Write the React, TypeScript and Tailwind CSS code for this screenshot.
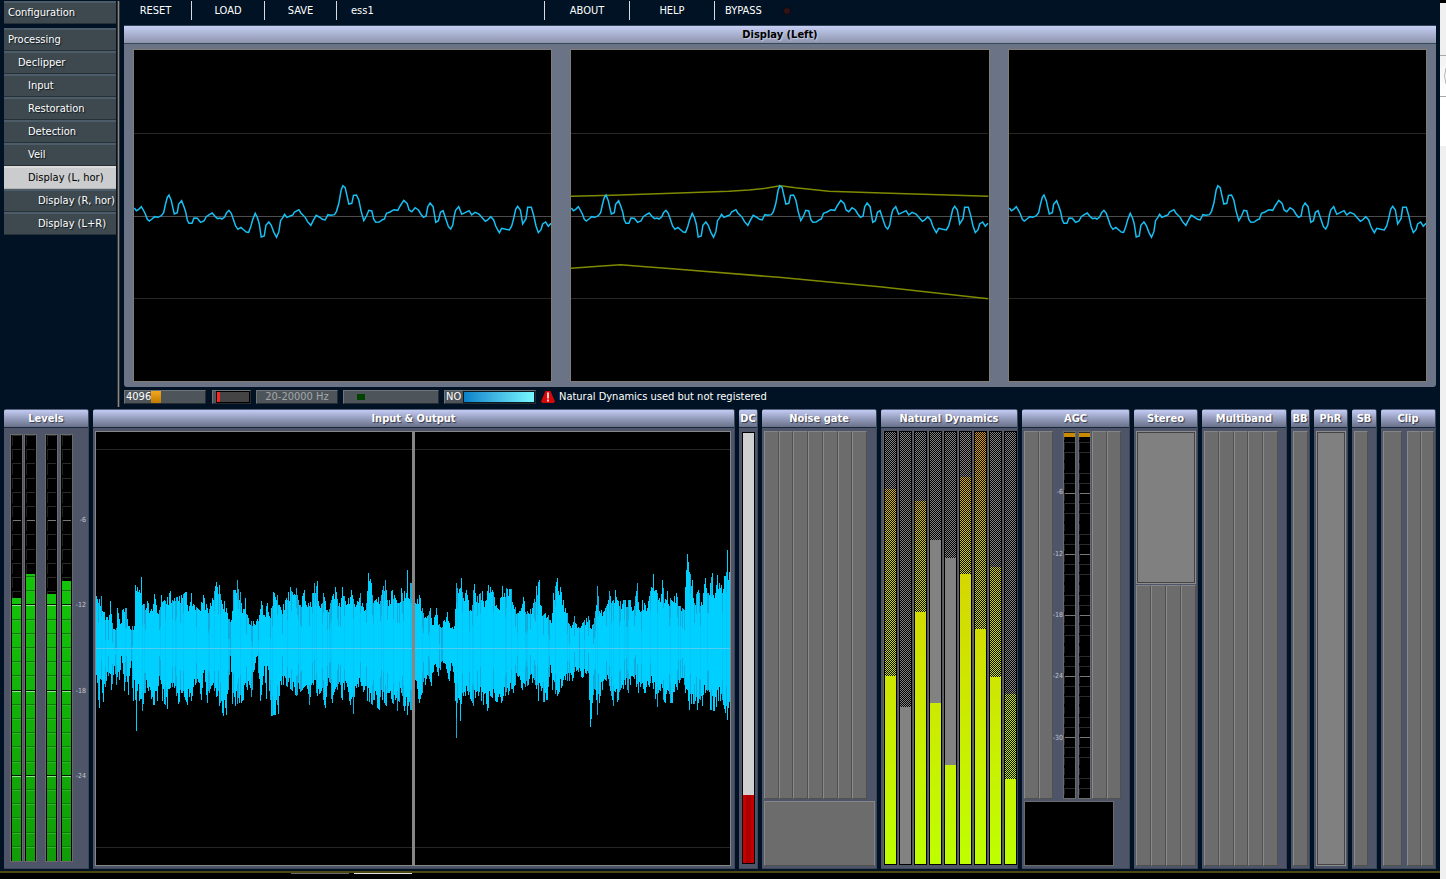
import React from 'react';

// ---------- Data ----------

const menu = [
  { label: 'Processing', indent: 'pl-1' },
  { label: 'Declipper', indent: 'pl-3.5' },
  { label: 'Input', indent: 'pl-6' },
  { label: 'Restoration', indent: 'pl-6' },
  { label: 'Detection', indent: 'pl-6' },
  { label: 'Veil', indent: 'pl-6' },
  { label: 'Display (L, hor)', indent: 'pl-6', active: true },
  { label: 'Display (R, hor)', indent: 'pl-8.5' },
  { label: 'Display (L+R)', indent: 'pl-8.5' },
];

const scopeWave =
  '27,174 33,182 40,178 48,170 54,180 60,192 66,208 72,213 80,207 88,200 98,202 108,197 115,188 120,165 126,142 131,135 138,152 143,175 147,192 156,188 160,163 169,152 176,170 181,185 186,210 191,220 200,220 206,204 216,205 226,217 236,213 243,200 252,194 261,189 270,200 277,206 284,204 290,207 298,201 304,188 311,181 318,190 324,207 331,228 338,238 347,232 356,240 363,246 370,247 376,232 382,210 390,190 397,204 402,222 408,261 417,258 422,226 431,216 438,226 446,247 454,262 461,245 466,212 473,202 478,193 485,202 495,198 503,195 508,186 521,179 527,189 540,202 547,215 557,226 564,212 573,196 582,201 592,208 600,210 608,194 617,196 628,194 634,184 641,160 648,120 653,107 660,113 666,140 671,162 680,160 685,136 694,135 701,150 708,184 716,212 724,198 731,181 740,183 746,208 752,217 762,216 772,209 778,207 784,190 795,186 806,179 818,181 825,168 836,151 846,160 852,180 860,185 870,173 880,180 887,192 895,202 903,198 908,170 915,159 924,170 932,217 940,212 946,187 954,182 962,206 970,230 977,237 983,225 988,195 992,180 1001,170 1010,193 1020,188 1032,182 1040,195 1050,187 1062,192 1072,204 1081,214 1088,210 1097,200 1106,210 1112,228 1118,240 1123,248 1130,235 1142,238 1153,240 1160,228 1166,205 1172,178 1178,169 1186,180 1193,222 1203,206 1208,172 1219,172 1226,196 1233,228 1240,248 1248,239 1253,222 1262,216 1270,229 1278,220';

const scopeUpper =
  '26,139 150,136 330,130 500,124 560,120 610,115 655,107 700,113 800,124 960,129 1279,139';
const scopeLower = '26,355 120,348 175,344 250,350 330,356 650,382 960,411 1279,446';

// Peaks of the input and output signal, three units per pixel column
const inTop =
  '21,200 35,200 40,245 60,255 63,215 68,280 80,295 83,235 95,280 98,240 112,235 118,290 134,290 138,165 150,180 157,143 160,225 175,215 190,245 195,192 205,250 217,195 228,215 243,183 255,205 270,200 290,187 300,230 305,190 315,225 330,240 342,195 355,235 370,205 381,156 390,165 395,210 405,215 415,250 425,270 432,180 438,180 444,150 452,187 460,250 467,205 475,255 485,275 500,275 510,255 517,215 525,255 533,220 543,265 551,186 565,195 575,240 590,205 603,171 620,175 630,225 645,180 660,230 676,160 685,153 690,230 702,190 715,240 730,200 737,172 750,220 760,171 770,225 787,180 800,225 812,190 828,240 836,129 847,160 855,215 875,195 887,152 895,210 908,180 925,220 937,175 950,190 953,120 957,205 962,160';
const inBottom =
  '21,435 29,535 35,450 42,518 50,455 60,430 67,480 75,410 82,465 90,450 97,380 105,485 112,440 118,495 125,395 131,515 136,450 141,603 145,485 151,515 160,545 165,490 178,485 193,527 203,515 212,450 220,515 235,538 245,460 260,500 268,523 280,490 294,525 305,515 320,460 335,512 345,420 353,520 365,470 375,485 390,530 403,560 412,557 417,480 424,380 430,522 438,530 445,522 455,520 463,510 475,480 487,502 497,400 503,380 514,515 525,410 531,508 535,410 545,560 556,555 566,553 575,465 590,470 605,480 620,500 635,485 650,465 659,525 670,460 684,500 697,485 707,535 715,470 730,520 745,480 758,510 770,460 780,515 792,553 800,475 815,470 835,515 850,525 870,540 880,510 890,530 900,490 910,520 925,545 935,490 945,545 953,555 962,540';
const outTop =
  '30,220 43,197 52,235 65,260 75,235 82,285 93,235 100,285 115,275 126,248 135,295 148,290 152,160 160,190 168,145 175,205 183,180 195,240 207,163 215,200 230,185 240,215 250,165 262,180 275,235 285,205 292,168 305,178 318,178 325,225 340,250 354,202 365,245 380,235 387,207 394,168 401,152 405,225 420,250 430,255 438,280 445,190 456,145 465,172 473,212 485,250 495,290 508,258 515,295 530,280 550,258 556,295 570,245 577,168 582,245 600,235 611,185 620,215 630,180 645,215 660,210 675,210 680,245 690,200 697,160 703,240 712,210 725,235 737,172 745,132 752,180 762,205 772,152 778,220 785,183 800,215 812,190 825,230 836,240 846,72 853,127 860,150 865,205 880,180 890,225 899,145 910,190 920,131 928,205 937,137 945,175 957,140 965,60 968,150 974,115';
const outBottom =
  '30,450 41,520 50,490 60,465 70,440 79,470 88,405 100,440 112,395 125,430 131,455 138,400 147,460 153,625 158,505 166,575 175,500 190,495 205,530 220,500 235,525 247,545 255,500 270,515 288,520 300,500 325,490 335,440 350,480 365,470 380,460 399,515 405,470 415,518 425,510 436,405 442,480 455,500 470,470 485,455 500,455 515,420 530,445 548,430 556,593 562,520 570,480 577,555 585,500 600,450 612,470 625,530 640,512 660,465 670,490 680,440 700,490 720,490 740,460 755,533 760,490 780,520 800,520 815,480 825,450 840,490 852,540 875,540 890,530 900,490 915,540 928,545 940,515 950,510 965,570 974,550';

// Band levels, measured downwards on a 432 high scale.
// dither: end of the dotted part, gray: end of the gray part
const bands = [
  { dither: 244, gray: 57 },
  { dither: 275, gray: 432 },
  { dither: 180, gray: 69 },
  { dither: 108, gray: 271 },
  { dither: 126, gray: 333 },
  { dither: 142, gray: 45 },
  { dither: 197, gray: 0 },
  { dither: 245, gray: 135 },
  { dither: 347, gray: 262 },
];

// ---------- Helpers ----------

const parse = (s: string) => s.split(' ').map((p) => p.split(',').map(Number));

const at = (pts: number[][], x: number) => {
  let i = 1;
  while (i < pts.length - 1 && pts[i][0] < x) i++;
  const [x0, y0] = pts[i - 1];
  const [x1, y1] = pts[i];
  const t = Math.min(1, Math.max(0, (x - x0) / (x1 - x0)));
  return y0 + (y1 - y0) * t;
};

const noise = (n: number) => {
  const v = Math.sin(n * 127.1 + 3.7) * 43758.5453;
  return v - Math.floor(v);
};

// Listed peaks keep their full length, the columns between them are ragged
const reach = (pts: number[][], x: number, depth: number, n: number) => {
  const peak = pts.find((p) => Math.abs(p[0] - x) <= 1.5);
  if (peak) return Math.abs(peak[1] - 355) / 3;
  const r = noise(n);
  return (Math.abs(at(pts, x) - 355) / 3) * (r > 0.65 ? 1 : 1 - depth * (0.25 + r));
};

// ---------- Parts ----------

const Scope = ({ limits = false }: { limits?: boolean }) => (
  <div className="flex-1 min-w-0 bg-black border border-[#827d74]">
    <svg className="block w-full h-full" viewBox="26 -300 1253 993" preserveAspectRatio="none" fill="none">
      <g stroke="#262626" shapeRendering="crispEdges">
        <line x1="26" x2="1279" y1="-50" y2="-50" vectorEffect="non-scaling-stroke" />
        <line x1="26" x2="1279" y1="199" y2="199" stroke="#4c4c4c" vectorEffect="non-scaling-stroke" />
        <line x1="26" x2="1279" y1="445" y2="445" vectorEffect="non-scaling-stroke" />
      </g>
      {limits && (
        <g stroke="#7f8a00" strokeWidth="1.5">
          <polyline points={scopeUpper} vectorEffect="non-scaling-stroke" />
          <polyline points={scopeLower} vectorEffect="non-scaling-stroke" />
        </g>
      )}
      <polyline points={scopeWave} stroke="#17c0f4" strokeWidth="1.5" vectorEffect="non-scaling-stroke" />
    </svg>
  </div>
);

const Signal = ({ top, bottom, start, seed }: { top: string; bottom: string; start: number; seed: number }) => {
  const up = parse(top);
  const down = parse(bottom);
  const columns = Array.from({ length: 315 }, (_, i) => {
    const x = start + i * 3;
    return {
      top: Math.round(216 - reach(up, x, 0.22, i + seed)),
      bottom: Math.round(216 + reach(down, x, 0.3, i * 2 + seed + 9)),
      dim: noise(i * 3 + seed),
    };
  });
  return (
    <div className="flex-1 min-w-0 bg-black border border-[#868686]">
      <svg className="block w-full h-full" viewBox="0 0 315 433" preserveAspectRatio="none" shapeRendering="crispEdges">
        <rect y="17" width="315" height="1" fill="#262626" />
        <rect y="415" width="315" height="1" fill="#262626" />
        {columns.map((c, i) => (
          <g key={i}>
            <rect x={i} y={c.top} width="1" height={c.bottom - c.top} fill={c.dim > 0.72 ? '#12acdc' : '#00d0ff'} />
            <rect x={i} y={c.top + 20} width="1" height={Math.max(0, c.bottom - c.top - 40)} fill={c.dim > 0.85 ? '#04c6f6' : '#00d0ff'} />
          </g>
        ))}
        <rect y="216" width="315" height="1" fill="#52cdf2" />
      </svg>
    </div>
  );
};

const Meter = ({ count, level, cap, id }: { count: number; level?: number; cap?: boolean; id: string }) => {
  const step = 427 / count;
  return (
    <div className="w-[13px] bg-black border border-[#6b6b6b]">
      <svg className="block w-full h-full" viewBox="0 0 11 427" preserveAspectRatio="none" shapeRendering="crispEdges">
        <defs>
          <linearGradient id={id} x1="0" x2="0" y1="0" y2="427" gradientUnits="userSpaceOnUse">
            <stop offset="0.35" stopColor="#13c40a" />
            <stop offset="1" stopColor="#119b08" />
          </linearGradient>
        </defs>
        {Array.from({ length: count }, (_, i) => (
          <g key={i}>
            <rect x={cap ? 0 : 1} y={i * step} width={cap ? 11 : 9} height="1" fill={i > 0 && i % 6 === 0 ? '#777777' : '#2b2b2b'} />
            <rect x={cap ? 0 : 1} y={i * step} width="1" height={step - 3} fill="#202020" />
          </g>
        ))}
        {cap && <rect x="0" y="1" width="11" height="5" fill="#c88a00" />}
        {level !== undefined && (
          <>
            <rect x="1" y={level} width="9" height={427 - level} fill={`url(#${id})`} />
            {Array.from({ length: count }, (_, i) => i)
              .filter((i) => i * step > level)
              .map((i) => (
                <g key={i}>
                  <rect x="1" y={i * step - 1} width="9" height="1" fill={i % 6 === 0 ? '#001800' : '#0c7c06'} />
                  <rect x="1" y={i * step} width="9" height="1" fill={i % 6 === 0 ? '#8fe58a' : '#2cb526'} />
                </g>
              ))}
          </>
        )}
      </svg>
    </div>
  );
};

const Band = ({ dither, gray, index }: { dither: number; gray: number; index: number }) => (
  <div className="w-[14px] bg-black border-l border-[#68635e] p-px">
    <div className="relative h-full bg-linear-to-b from-[#dc9a00] via-[#d6d400] via-28% to-[#beff00]">
      <div className="bg-[#828282]" style={{ height: `${(gray / 432) * 100}%` }} />
      <svg className="absolute inset-0 w-full h-full" shapeRendering="crispEdges">
        <defs>
          {/* bands are 15px apart, so every other one shifts to keep one checkerboard */}
          <pattern id={`dots${index}`} x={index % 2} width="2" height="2" patternUnits="userSpaceOnUse">
            <rect width="1" height="1" />
            <rect x="1" y="1" width="1" height="1" />
          </pattern>
        </defs>
        <rect width="100%" height={`${(dither / 432) * 100}%`} fill={`url(#dots${index})`} />
      </svg>
    </div>
  </div>
);

const Slot = ({ wide = false }: { wide?: boolean }) => (
  <div
    className={`${wide ? 'w-[19px]' : 'flex-1 min-w-0'} bg-[#6c6c6c] border-t border-l border-t-[#858585] border-l-[#8a8a8a] border-r border-r-[#50504c] border-b border-b-[#50504c]`}
  />
);

const Slots = ({ count }: { count: number }) => (
  <>
    {Array.from({ length: count }, (_, i) => (
      <Slot key={i} />
    ))}
  </>
);

const Well = ({ className = '' }: { className?: string }) => (
  <div className={`flex bg-[#808080] border border-[#8c8c8c] ${className}`}>
    <div className="flex-1 border border-[#444444]" />
  </div>
);

const Scale = ({ rows, labels }: { rows: string; labels: string[] }) => (
  <div className={`grid ${rows} text-[7px] leading-[8px] text-[#c3c6d0]`}>
    {labels.map((l) => (
      <div key={l} className="flex items-end justify-end whitespace-nowrap">
        <span className="translate-y-1/2">{l}</span>
      </div>
    ))}
  </div>
);

const Panel = ({ title, width, children }: { title: string; width: string; children: React.ReactNode }) => (
  <section className={`${width} flex flex-col min-w-0 rounded-t-[3px] overflow-hidden bg-[#4f5568] border-r border-b border-[#3b4659]`}>
    <h2 className="h-[18px] shrink-0 flex items-center justify-center whitespace-nowrap font-bold text-white bg-linear-to-b from-[#c3cbf4] to-[#697189] border-t border-[#56607a] [text-shadow:1px_1px_1px_#30384c]">
      {title}
    </h2>
    <div className="h-px shrink-0 bg-[#17273b]" />
    <div className="flex-1 min-h-0 flex flex-col pt-[3px] pb-[2px] pl-[2px] pr-px">{children}</div>
  </section>
);

const Divider = () => <div className="w-px my-px bg-[#d8dce0]" />;

const box = 'h-[14px] flex items-center bg-[#4d555b] border border-t-[#6e7478] border-l-[#6e7478] border-b-[#262c30] border-r-[#262c30]';

// ---------- App ----------

export default function App() {
  return (
    <div className="h-screen flex overflow-hidden bg-[#001224] text-white text-[11px] leading-[14px] font-['DejaVu_Sans_Condensed','DejaVu_Sans',sans-serif]">
      <div className="flex-1 min-w-0 grid grid-rows-[407fr_464fr_8px]">
        <div className="flex min-h-0">
          {/* Sidebar */}
          <nav className="w-[120px] shrink-0 pl-1 pt-px flex">
            <div className="w-[112px] flex flex-col">
              <button className="h-[23px] mb-1 pl-1 text-left bg-[#3d484f] border-t-2 border-b border-t-[#4c5c69] border-b-[#263037] [text-shadow:1px_1px_1px_#10181e]">
                Configuration
              </button>
              {menu.map((m) => (
                <button
                  key={m.label}
                  className={`h-[23px] ${m.indent} text-left whitespace-nowrap border-t-2 border-b ${
                    m.active
                      ? 'bg-[#cbccce] text-black border-t-[#dcdcdc] border-b-[#b4b4b4]'
                      : 'bg-[#3d484f] border-t-[#4c5c69] border-b-[#263037] [text-shadow:1px_1px_1px_#10181e]'
                  }`}
                >
                  {m.label}
                </button>
              ))}
            </div>
            <div className="w-[3px] ml-px bg-[#8a8782] border-x border-[#33373b]" />
          </nav>

          <main className="flex-1 min-w-0 flex flex-col">
            {/* Toolbar */}
            <div className="h-[25px] pb-1 flex">
              <button className="w-[71px]">RESET</button>
              <Divider />
              <button className="w-[72px]">LOAD</button>
              <Divider />
              <button className="w-[71px]">SAVE</button>
              <Divider />
              <span className="w-[207px] pl-[14px] self-center">ess1</span>
              <Divider />
              <button className="w-[84px]">ABOUT</button>
              <Divider />
              <button className="w-[84px]">HELP</button>
              <Divider />
              <button className="pl-[10px] flex items-center gap-[21px]">
                BYPASS
                <span className="w-2 h-2 rounded-full bg-[#341314] border border-[#0c0a10]" />
              </button>
            </div>

            {/* Scopes */}
            <section className="flex-1 min-h-0 ml-1 mr-1 flex flex-col bg-[#6b7386] rounded-b-[3px]">
              <h1 className="h-[18px] shrink-0 flex items-center justify-center font-bold text-black bg-linear-to-b from-[#c6cff5] to-[#8d94ac] border-t border-[#334357] [text-shadow:1px_1px_1px_#c8cce0]">
                Display (Left)
              </h1>
              <div className="h-px bg-[#35475a]" />
              <div className="flex-1 min-h-0 flex gap-[18px] px-[9px] py-[5px]">
                <Scope />
                <Scope limits />
                <Scope />
              </div>
            </section>

            {/* Status */}
            <div className="h-5 pl-1 pt-[3px] flex">
              <div className={`${box} w-[82px]`}>
                <span className="w-[26px] pl-px">4096</span>
                <div className="w-[10px] h-full bg-linear-to-b from-[#f3a81c] to-[#c07c00]" />
              </div>
              <div className={`${box} w-[39px] ml-[6px] pl-[3px]`}>
                <div className="flex-1 h-full bg-[#444444] border border-black">
                  <div className="w-[3px] h-full bg-[#ff2424]" />
                </div>
              </div>
              <div className={`${box} w-[82px] ml-[5px] justify-center text-[#a4a8aa]`}>20-20000 Hz</div>
              <div className={`${box} w-[96px] ml-[5px] pl-[13px]`}>
                <div className="w-2 h-[6px] bg-[#004400]" />
              </div>
              <div className={`${box} w-[92px] ml-[5px]`}>
                <span className="w-[18px] pl-px">NO</span>
                <div className="flex-1 h-full bg-linear-to-r from-[#0882c8] to-[#78f8ff] border border-[#0a1a24]" />
              </div>
              <svg className="ml-[5px] w-[14px] h-[14px]" viewBox="0 0 14 14">
                <path d="M4.5 1h5L14 11.5 12.5 13h-11L0 11.5z" fill="#d40808" />
                <path d="M7 2.5v6M7 9.5v2" stroke="#ffffff" strokeWidth="1.6" />
              </svg>
              <span className="ml-1 whitespace-nowrap">Natural Dynamics used but not registered</span>
            </div>
          </main>
        </div>

        {/* Processing panels */}
        <div className="min-h-0 flex gap-1 pl-1 pr-1 pt-[2px] pb-[2px]">
          <Panel title="Levels" width="w-[85px]">
            <div className="flex-1 min-h-0 flex pl-1 pt-[3px] pb-1">
              <Meter id="lv1" count={30} level={163} />
              <div className="w-px" />
              <Meter id="lv2" count={30} level={139} />
              <div className="w-2" />
              <Meter id="lv3" count={30} level={159} />
              <div className="w-[2px]" />
              <Meter id="lv4" count={30} level={146} />
              <div className="flex-1 flex justify-end pr-px">
                <Scale rows="grid-rows-5" labels={['-6', '-12', '-18', '-24']} />
              </div>
            </div>
          </Panel>

          <Panel title="Input &amp; Output" width="flex-1">
            <div className="flex-1 min-h-0 flex pr-[2px]">
              <Signal top={inTop} bottom={inBottom} start={21} seed={5} />
              <div className="w-px bg-[#868686]" />
              <Signal top={outTop} bottom={outBottom} start={30} seed={71} />
            </div>
          </Panel>

          <Panel title="DC" width="w-[19px]">
            <div className="flex-1 min-h-0 flex flex-col border border-black bg-[#d0d0d0] mt-px mb-[2px] mx-px">
              <div className="flex-[363]" />
              <div className="flex-[68] bg-[#ac0000] border-x-3 border-[#c80000]" />
            </div>
          </Panel>

          <Panel title="Noise gate" width="w-[115px]">
            <div className="flex-1 min-h-0 flex pr-[8px]">
              <Slots count={7} />
            </div>
            <div className="h-[65px] mt-[2px] bg-[#6c6c6c] border border-[#858585] border-b-[#50504c]" />
          </Panel>

          <Panel title="Natural Dynamics" width="w-[137px]">
            <div className="flex-1 min-h-0 flex gap-px pb-px -mr-px">
              {bands.map((b, i) => (
                <Band key={i} index={i} dither={b.dither} gray={b.gray} />
              ))}
            </div>
          </Panel>

          <Panel title="AGC" width="w-[108px]">
            <div className="flex-1 min-h-0 flex">
              <div className="w-[29px] flex">
                <Slots count={2} />
              </div>
              <div className="w-[10px] flex justify-end">
                <Scale rows="grid-rows-6" labels={['-6', '-12', '-18', '-24', '-30']} />
              </div>
              <Meter id="agc1" count={36} cap />
              <div className="w-[2px]" />
              <Meter id="agc2" count={36} cap />
              <div className="w-px" />
              <div className="w-[29px] flex">
                <Slots count={2} />
              </div>
            </div>
            <div className="h-[65px] w-[90px] mt-[2px] bg-black border border-[#6b6b6b]" />
          </Panel>

          <Panel title="Stereo" width="w-[64px]">
            <Well className="flex-[151]" />
            <div className="flex-[282] flex mt-px">
              <Slots count={4} />
            </div>
          </Panel>

          <Panel title="Multiband" width="w-[85px]">
            <div className="flex-1 flex pr-[7px]">
              <Slots count={5} />
            </div>
          </Panel>

          <Panel title="BB" width="w-[19px]">
            <div className="flex-1 flex">
              <Slot />
            </div>
          </Panel>

          <Panel title="PhR" width="w-[34px]">
            <Well className="flex-1" />
          </Panel>

          <Panel title="SB" width="w-[25px]">
            <div className="flex-1 flex pr-[7px]">
              <Slot />
            </div>
          </Panel>

          <Panel title="Clip" width="w-[55px]">
            <div className="flex-1 flex">
              <Slot wide />
              <div className="w-[5px]" />
              <Slots count={2} />
            </div>
          </Panel>
        </div>

        {/* Edge of the desktop task bar */}
        <footer className="bg-black border-t-2 border-[#4d4812] flex">
          <div className="ml-[291px] w-[58px] h-px bg-[#6a6a6a]" />
          <div className="ml-[5px] w-[58px] h-px bg-[#e0e0e0]" />
        </footer>
      </div>

      {/* Sliver of the window behind */}
      <aside className="w-[6px] shrink-0 flex flex-col bg-[#f0f0f0] border-t-3 border-black">
        <div className="h-[52px]" />
        <div className="h-[42px] bg-linear-to-b from-[#f2f2f2] to-white border-y border-[#a8a8a8] flex items-center justify-end">
          <svg className="w-[2px] h-4" viewBox="0 0 2 16" fill="none">
            <path d="M2 0Q-1 8 2 16" stroke="#b8b8b8" />
          </svg>
        </div>
        <div className="h-[49px] bg-white" />
      </aside>
    </div>
  );
}
